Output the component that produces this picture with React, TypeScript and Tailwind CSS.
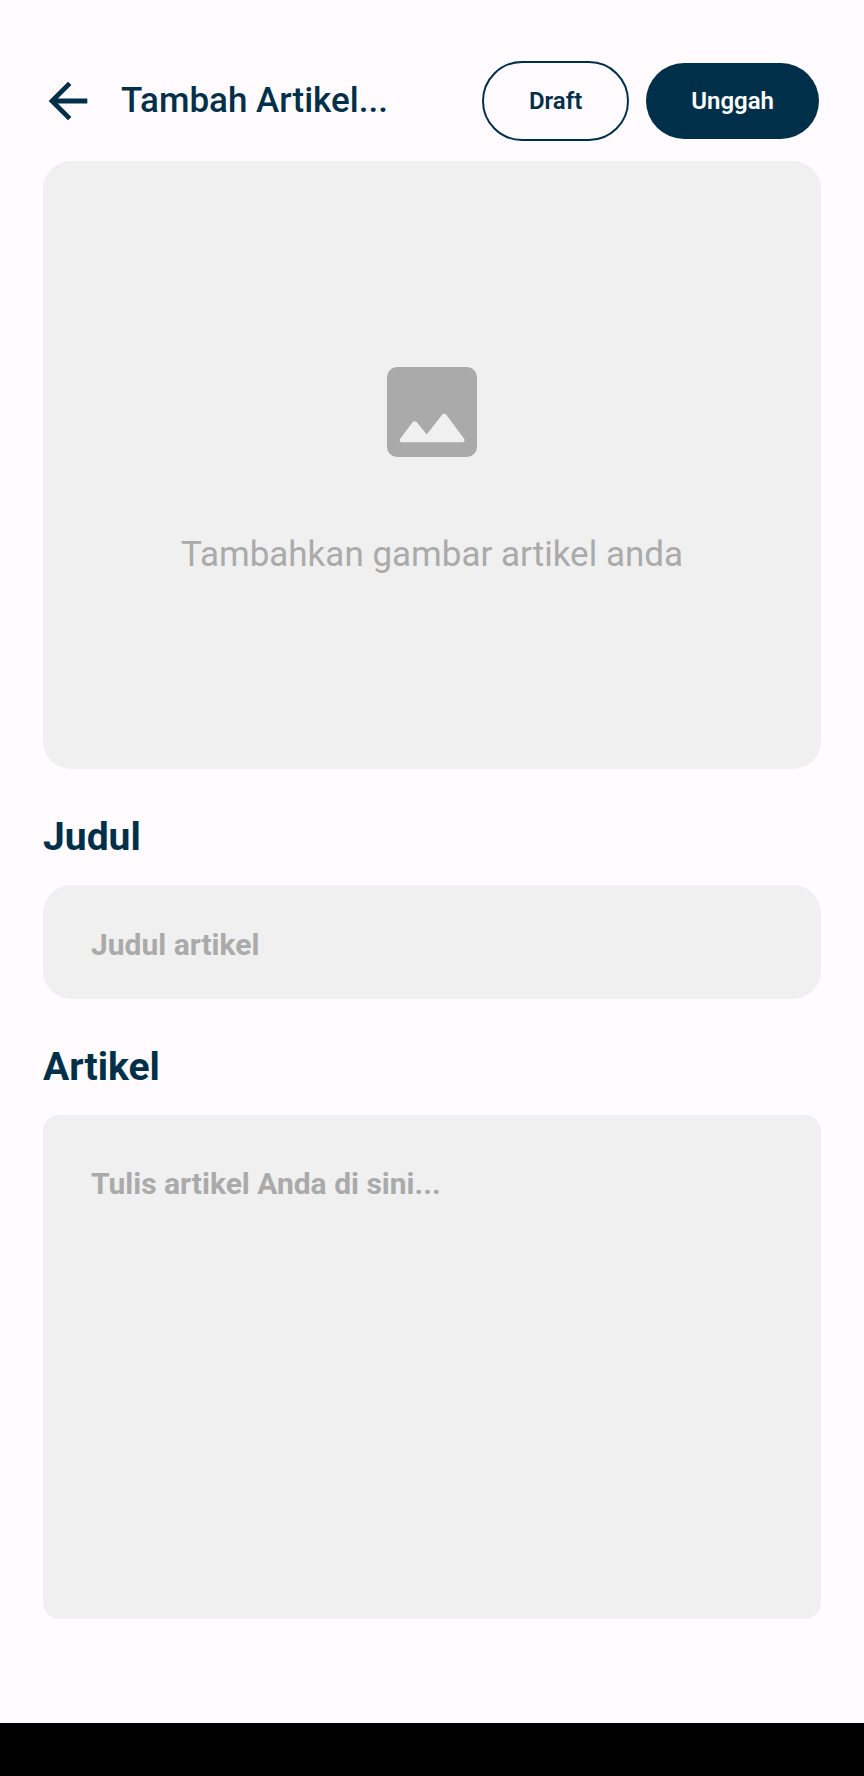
import React from "react";

const fieldClass =
  "block w-full border-0 bg-[#f0f0f0] px-12 font-bold text-[#003049] placeholder:text-[#aaaaaa] placeholder:opacity-100 text-[30px] leading-9 outline-none";

function BackIcon() {
  return (
    <svg viewBox="0 0 24 24" className="size-[58px]" fill="currentColor" aria-hidden="true">
      <path d="M20 11H7.83l5.59-5.59L12 4l-8 8 8 8 1.41-1.41L7.83 13H20v-2z" />
    </svg>
  );
}

function PictureIcon() {
  return (
    <svg viewBox="0 0 90 90" className="size-[90px]" aria-hidden="true">
      <rect width="90" height="90" rx="10" fill="#aaaaaa" />
      <path
        d="M14.7 75.3C12.9 75.3 12.1 73.3 13.2 71.8L25.4 55.5C26.6 53.9 28.8 53.9 30 55.5L39.7 67.6L54.9 48C56.1 46.4 58.3 46.4 59.5 48L77.1 71.8C78.2 73.3 77.4 75.3 75.6 75.3Z"
        fill="#f0f0f0"
      />
    </svg>
  );
}

export default function App() {
  return (
    <div className="flex min-h-screen flex-col bg-[#fffbff] font-['Roboto',sans-serif] text-[#003049]">
      <header className="flex items-center pt-[61px] pr-[45px] pl-[39px] pb-5">
        <button type="button" aria-label="Kembali" className="shrink-0">
          <BackIcon />
        </button>
        <h1 className="ml-6 flex-1 truncate text-[35px] leading-10 font-medium">Tambah Artikel...</h1>
        <div className="flex shrink-0 items-center gap-[17px]">
          <button
            type="button"
            className="h-20 rounded-full border-2 border-[#003049] px-[45px] text-2xl font-semibold"
          >
            Draft
          </button>
          <button
            type="button"
            className="h-19 rounded-full bg-[#003049] px-[45px] text-2xl font-semibold text-white"
          >
            Unggah
          </button>
        </div>
      </header>

      <main className="flex flex-1 flex-col px-[43px] pb-26">
        <button
          type="button"
          className="flex h-[608px] w-full flex-col items-center justify-center gap-[78px] rounded-[28px] bg-[#f0f0f0] pt-3 text-[35px] leading-10 text-[#aaaaaa]"
        >
          <PictureIcon />
          Tambahkan gambar artikel anda
        </button>

        <label htmlFor="judul" className="mt-11 text-[39px] leading-12 font-bold">
          Judul
        </label>
        <input
          id="judul"
          type="text"
          placeholder="Judul artikel"
          className={`${fieldClass} mt-6 h-[114px] rounded-[28px] pt-1`}
        />

        <label htmlFor="artikel" className="mt-11 text-[39px] leading-12 font-bold">
          Artikel
        </label>
        <textarea
          id="artikel"
          placeholder="Tulis artikel Anda di sini..."
          className={`${fieldClass} mt-6 min-h-[504px] flex-1 resize-none rounded-2xl pt-[51px]`}
        />
      </main>

      <footer className="h-[53px] bg-black" />
    </div>
  );
}
